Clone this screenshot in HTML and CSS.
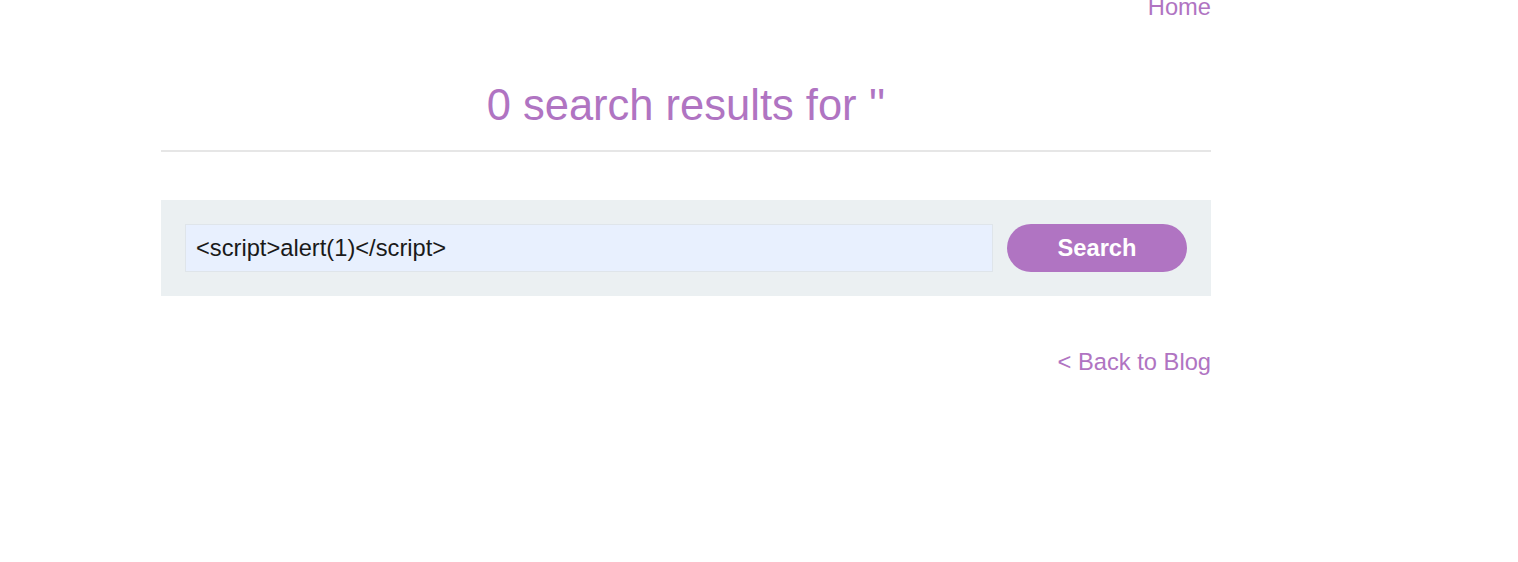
FILE: index.html
```html
<!DOCTYPE html>
<html>
<head>
<meta charset="utf-8">
<link rel="stylesheet" href="styles.css">
</head>
<body>
<div class="page">
  <nav class="nav"><a href="#" class="link">Home</a></nav>
  <h1 class="title">0 search results for ''</h1>
  <hr class="rule">
  <form class="search">
    <input class="field" type="text" value="<script>alert(1)</script>">
    <button class="btn" type="button">Search</button>
  </form>
  <div class="back"><a href="#" class="link">&lt; Back to Blog</a></div>
</div>
</body>
</html>
```
FILE: styles.css
```css
html, body { margin: 0; padding: 0; background: #fff; }
body { font-family: "Liberation Sans", Arial, sans-serif; font-size: 23.7px; line-height: 1.2; color: #222; }
.page { width: 1050px; margin-left: 161px; }
.nav { text-align: right; margin-top: -7px; height: 28px; }
.link { color: #b074c2; text-decoration: none; }
.title { margin: 58px 0 0; font-size: 43.5px; line-height: 52px; font-weight: normal; color: #b074c2; text-align: center; }
.rule { margin: 19px 0 0; border: 0; height: 2px; background: #e6e6e6; }
.search { margin-top: 48px; background: #ebf0f2; padding: 24px; display: flex; gap: 14px; align-items: center; }
.field { flex: 1; box-sizing: border-box; height: 48px; margin: 0; padding: 0 10px; border: 1px solid #dfe5ea; background: #e8f0fe; font-family: inherit; font-size: 23.7px; color: #1a1a1a; outline: none; }
.btn { box-sizing: border-box; width: 180px; height: 48px; border: 0; border-radius: 24px; background: #b074c2; color: #fff; font-family: inherit; font-size: 23.7px; font-weight: bold; padding: 0; cursor: pointer; }
.back { text-align: right; margin-top: 52px; }
```
